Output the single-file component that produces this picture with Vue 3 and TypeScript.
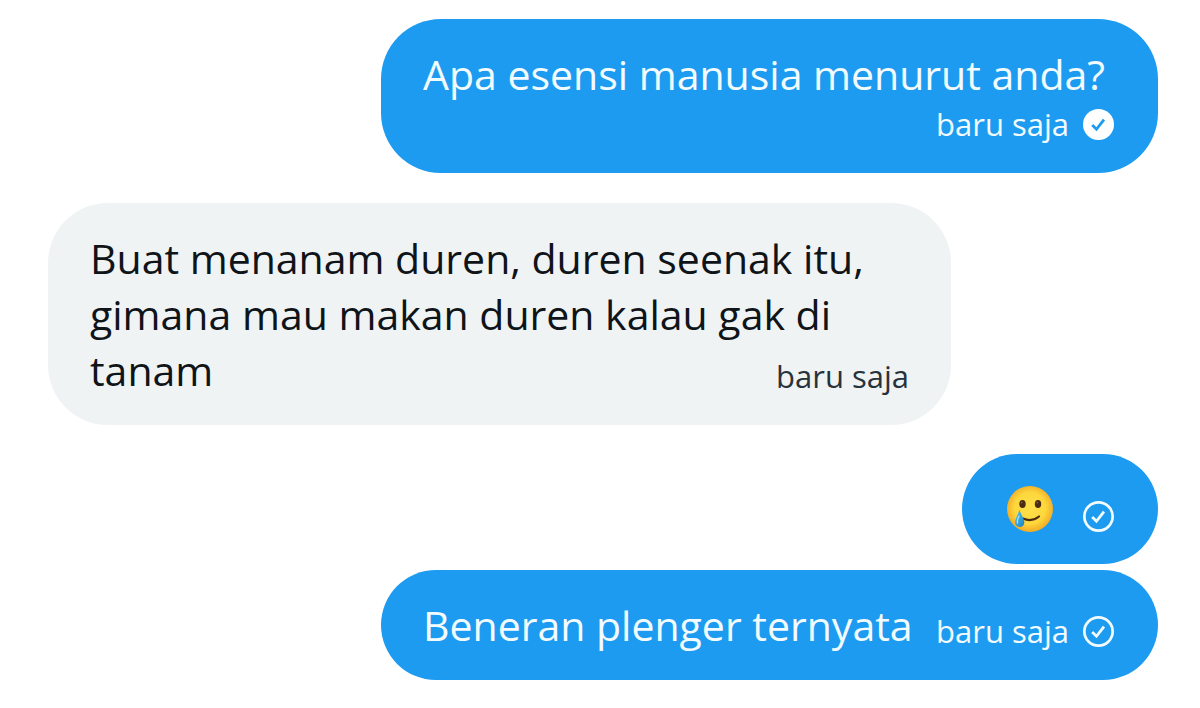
<script setup lang="ts">
interface Message {
  id: number
  from: 'me' | 'them'
  text?: string
  emoji?: boolean
  time?: string
  status?: 'read' | 'sent'
  layout: 'stacked' | 'inline' | 'corner' | 'compact'
}

const messages: Message[] = [
  { id: 1, from: 'me', text: 'Apa esensi manusia menurut anda?', time: 'baru saja', status: 'read', layout: 'stacked' },
  { id: 2, from: 'them', text: 'Buat menanam duren, duren seenak itu, gimana mau makan duren kalau gak di tanam', time: 'baru saja', layout: 'corner' },
  { id: 3, from: 'me', emoji: true, status: 'sent', layout: 'compact' },
  { id: 4, from: 'me', text: 'Beneran plenger ternyata', time: 'baru saja', status: 'sent', layout: 'inline' },
]
</script>

<template>
  <main class="chat">
    <article v-for="m in messages" :key="m.id" class="bubble" :class="[m.from, m.layout]">
      <p v-if="m.text" class="text">{{ m.text }}</p>
      <svg v-if="m.emoji" class="emoji" viewBox="0 0 48 48" role="img" aria-label="Smiling face with tear">
        <defs>
          <radialGradient id="face" cx="50%" cy="48%" r="52%">
            <stop offset="0" stop-color="#ffe04a" />
            <stop offset="0.65" stop-color="#fdd73c" />
            <stop offset="1" stop-color="#f2ab26" />
          </radialGradient>
          <linearGradient id="tear" x1="0" y1="0" x2="1" y2="1">
            <stop offset="0" stop-color="#5fc3ee" />
            <stop offset="0.6" stop-color="#2f9edb" />
            <stop offset="1" stop-color="#1b7cb9" />
          </linearGradient>
        </defs>
        <circle cx="24" cy="24" r="23" fill="url(#face)" />
        <ellipse cx="16.5" cy="19" rx="3.2" ry="3.9" fill="#4b2c12" />
        <ellipse cx="32" cy="19" rx="3.2" ry="3.9" fill="#4b2c12" />
        <circle cx="15.7" cy="17.6" r="0.9" fill="#876133" />
        <circle cx="31.2" cy="17.6" r="0.9" fill="#876133" />
        <path d="M17 33.5 Q25.5 37.5 33 31.5" fill="none" stroke="#4b2c12" stroke-width="2.2" stroke-linecap="round" />
        <path d="M13.4 24.5 C14.5 29 18.3 33.5 18.3 37 C18.3 40.5 16.4 42 13.7 42 C11 42 9 40.3 9 37 C9 33.5 12.5 29 13.4 24.5 Z" fill="url(#tear)" />
        <path d="M13 31 C11.5 34 11 36 11.5 38" fill="none" stroke="#a5e2f8" stroke-width="1.3" stroke-linecap="round" />
      </svg>
      <div class="meta">
        <time v-if="m.time">{{ m.time }}</time>
        <svg v-if="m.status === 'read'" class="status" viewBox="0 0 30 30" role="img" aria-label="Read">
          <circle cx="15" cy="15" r="15" fill="#fff" />
          <path d="M8.9 15.6 L13 19.6 L20.3 10.3" fill="none" stroke="#1d9bf0" stroke-width="2.7" />
        </svg>
        <svg v-if="m.status === 'sent'" class="status" viewBox="0 0 30 30" role="img" aria-label="Sent">
          <circle cx="15" cy="15" r="13.7" fill="none" stroke="#f2fcff" stroke-width="2.6" />
          <path d="M8.9 15.6 L13 19.6 L20.3 10.3" fill="none" stroke="#f2fcff" stroke-width="2.7" />
        </svg>
      </div>
    </article>
  </main>
</template>

<style>
body {
  margin: 0;
  background: #fff;
}
</style>

<style scoped>
.chat {
  display: flex;
  flex-direction: column;
  padding: 19px 42px 28px 48px;
  font-family: "Open Sans", "Noto Sans", sans-serif;
}

.bubble {
  box-sizing: border-box;
  display: flex;
  justify-content: space-between;
  align-items: flex-end;
  padding: 27px 42px;
  border-radius: 60px;
  font-size: 41px;
  line-height: 56px;
}

.me {
  align-self: flex-end;
  padding-right: 44px;
  background: #1d9bf0;
  color: #f2fcff;
}

.them {
  align-self: flex-start;
  margin: 30px 0 29px;
  background: #eff3f4;
  color: #0f1419;
}

.stacked {
  flex-direction: column;
  width: 70%;
}

.inline {
  width: 70%;
  margin-top: 6px;
}

.corner {
  display: flow-root;
  width: 903px;
  max-width: 100%;
}

.compact {
  gap: 29px;
  padding-left: 44px;
}

.text {
  margin: 0;
}

.stacked .text {
  align-self: flex-start;
}

/* The timestamp shares the last text line when there is room for it. */
.corner .text {
  display: inline;
}

.meta {
  display: flex;
  align-items: center;
  justify-content: flex-end;
  gap: 14px;
  height: 44px;
  font-size: 31px;
  line-height: 44px;
  white-space: nowrap;
}

.corner .meta {
  float: right;
  margin-top: 12px;
  color: #28323a;
}

.compact .meta {
  height: 42px;
}

.status {
  display: block;
  width: 31px;
  height: 31px;
}

.emoji {
  display: block;
  width: 48px;
  height: 56px;
}
</style>
